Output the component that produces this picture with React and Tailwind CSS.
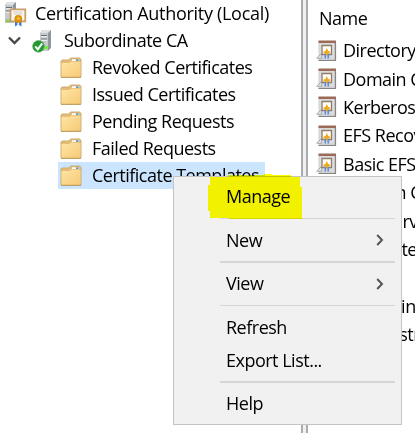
const rootFolders = [
  'Revoked Certificates',
  'Issued Certificates',
  'Pending Requests',
  'Failed Requests',
];

const templates = [
  'Directory E-mail Replication',
  'Domain Controller Authentication',
  'Kerberos Authentication',
  'EFS Recovery Agent',
  'Basic EFS',
  'Domain Controller',
  'Web Server',
  'Computer',
  'User',
  'Subordinate CA',
  'Administrator',
];

function ServerTower() {
  return (
    <>
      <path d="M1 3 4 0h8v18l-3 3H1z" fill="#8f979c" />
      <path d="M1 3h8v18H1z" fill="#c3c9cc" />
      <path d="M1 3 4 0h8L9 3z" fill="#dde2e4" />
      <path d="M2 5.500h6M2 9h6" stroke="#687177" strokeWidth="1.200" />
      <path d="M2 6.800h6M2 10.300h6" stroke="#f5f7f7" strokeWidth="1" />
    </>
  );
}

function AuthorityIcon() {
  return (
    <svg className="h-[26px] w-6 shrink-0" viewBox="0 0 24 26">
      <g transform="translate(0 1)">
        <ServerTower />
      </g>
      <path d="M1.500 18.500h4.500v3H1.500z" fill="#8ecb63" />
      <path d="M6.500 8.300h14.800v12h-14.800z" fill="#fbf7ee" stroke="#c99c6c" strokeWidth="1.800" />
      <path d="M9.500 11h9M9.500 13h9" stroke="#c5c1ba" strokeWidth=".8" />
      <path d="M11 19.500v6l2.500-1.500v-5zM15 19v5l2.500 1.500v-6z" fill="#3c7edb" />
      <circle cx="14.300" cy="18" r="3.900" fill="#d98f0e" />
      <circle cx="14.300" cy="17.500" r="1.800" fill="#f4b92f" />
    </svg>
  );
}

function CaIcon() {
  return (
    <svg className="h-6 w-5 shrink-0" viewBox="0 0 20 24">
      <g transform="translate(7 1)">
        <ServerTower />
      </g>
      <path d="M13 17h3v3h-3z" fill="#76ee35" />
      <circle cx="6.500" cy="17.300" r="5.900" fill="#239b2e" stroke="#66a96a" strokeWidth=".6" />
      <path d="m3.300 17.300 2.500 3 4.400-6" fill="none" stroke="#fff" strokeWidth="2" />
    </svg>
  );
}

function FolderIcon() {
  return (
    <svg className="h-[22px] w-[22px] shrink-0" viewBox="0 0 22 22">
      <defs>
        <linearGradient id="folder" x1="0" y1="0" x2="1" y2="1">
          <stop offset="0" stopColor="#ffe5a5" />
          <stop offset="1" stopColor="#f6ca76" />
        </linearGradient>
      </defs>
      <path d="M1 4.200 2 3h7l1.500-2h9.200l1.300 1.500V20H1z" fill="#e6bd76" stroke="#c5a66d" strokeWidth=".9" />
      <path d="M12 2.300h7v1.700h-7z" fill="#fff" />
      <path d="M16 2.300h2.500v1.700H16z" fill="#4a9bc9" />
      <path d="M1.500 6h8L11 4.700h9.500V20h-19z" fill="url(#folder)" />
      <path d="M1 20.300h20" stroke="#b89453" strokeWidth="1" />
    </svg>
  );
}

function TemplateIcon() {
  return (
    <svg className="h-[22px] w-[21px] shrink-0" viewBox="0 0 21 22">
      <path d="M2.500 1h17.500v20H2.500z" fill="#cfcfcf" />
      <path d="M19.500 3v17.500H2.500" fill="none" stroke="#858585" strokeWidth="1.200" />
      <path d="M2.500.500H20v2.500H2.500z" fill="#9d6a59" />
      <path d="M3.500 3.200h14.500v15.300H3.500z" fill="#dedede" />
      <path d="m.700 18.300 5-5v5z" fill="#e3e5e6" stroke="#8e9295" strokeWidth=".7" />
      <path d="M6 5.500h9.500v9H6z" fill="#fffdf6" stroke="#8e7c6c" strokeWidth="1.300" />
      <path d="M9.300 13.500v5M12.300 13.500v5" stroke="#5f8edb" strokeWidth="1.700" />
      <path d="m10.800 8 1.300 2.800 2.900 1.400-2.900 1.300-1.300 2.500-1.300-2.500-2.900-1.300 2.900-1.400z" fill="#f0aa20" />
    </svg>
  );
}

function Tree() {
  return (
    <nav className="h-[433px] w-[301px] shrink-0 overflow-hidden">
      <div className="flex h-[27px] items-center gap-[7px] pl-1">
        <AuthorityIcon />
        <span className="tracking-[-0.3px]">Certification Authority (Local)</span>
      </div>
      <div className="flex h-[27px] items-center pl-2">
        <svg className="h-[9px] w-[13px] shrink-0" viewBox="0 0 13 9">
          <path d="m1 1.500 5.500 5.500L12 1.500" fill="none" stroke="#484848" strokeWidth="2.400" />
        </svg>
        <div className="ml-[11px] flex items-center gap-[12px]">
          <CaIcon />
          <span>Subordinate CA</span>
        </div>
      </div>
      {rootFolders.map((name) => (
        <div key={name} className="flex h-[27px] items-center gap-[10px] pl-[60px]">
          <FolderIcon />
          <span>{name}</span>
        </div>
      ))}
      <div className="ml-[58px] flex h-[27px] w-[207px] items-center gap-[10px] bg-[#cce5ff] pl-[2px]">
        <FolderIcon />
        <span>Certificate Templates</span>
      </div>
    </nav>
  );
}

function MenuItem({ label, submenu }) {
  return (
    <div className="flex h-[33px] items-center justify-between pl-[52px] pr-[14px]">
      <span>{label}</span>
      {submenu && (
        <svg className="h-[12px] w-[8px]" viewBox="0 0 8 12">
          <path d="m1.200 1 4.800 5-4.800 5" fill="none" stroke="#555" strokeWidth="2" />
        </svg>
      )}
    </div>
  );
}

function Separator() {
  return <div className="my-[4.600px] ml-[46px] mr-[3px] h-[1.400px] bg-[#d6d6d6]" />;
}

export default function App() {
  return (
    <main className="relative flex h-[433px] w-[415px] overflow-hidden whitespace-nowrap bg-white font-['Open_Sans',sans-serif] text-[18px] leading-[27px] tracking-[-0.5px] text-black">
      <Tree />
      <div className="w-[7px] shrink-0 border-x-2 border-[#a9acb1] bg-[#f0f0f0]" />
      <section className="min-w-0 flex-1 overflow-hidden">
        <div className="flex h-[36.500px] items-center pl-[11px]">Name</div>
        {templates.map((name) => (
          <div key={name} className="flex h-[28.400px] items-center gap-[6px] pl-[8px]">
            <TemplateIcon />
            <span>{name}</span>
          </div>
        ))}
      </section>
      <div className="absolute left-[173px] top-[176px] h-[249px] w-[229px] border border-[#c4c4c4] bg-[#f1f1f1] py-[3px] pr-[3px]">
        <MenuItem label="Manage" />
        <Separator />
        <MenuItem label="New" submenu />
        <Separator />
        <MenuItem label="View" submenu />
        <Separator />
        <MenuItem label="Refresh" />
        <MenuItem label="Export List..." />
        <Separator />
        <MenuItem label="Help" />
      </div>
      <svg className="absolute left-[207px] top-[173px] h-[47px] w-[96px] mix-blend-multiply" viewBox="0 0 96 47">
        <path d="M3 4h18V2h36v-1h-2 10v1h19v2h9v10h2v32H22v-1H3v-7H1V12h2z" fill="#ffff00" />
      </svg>
    </main>
  );
}
